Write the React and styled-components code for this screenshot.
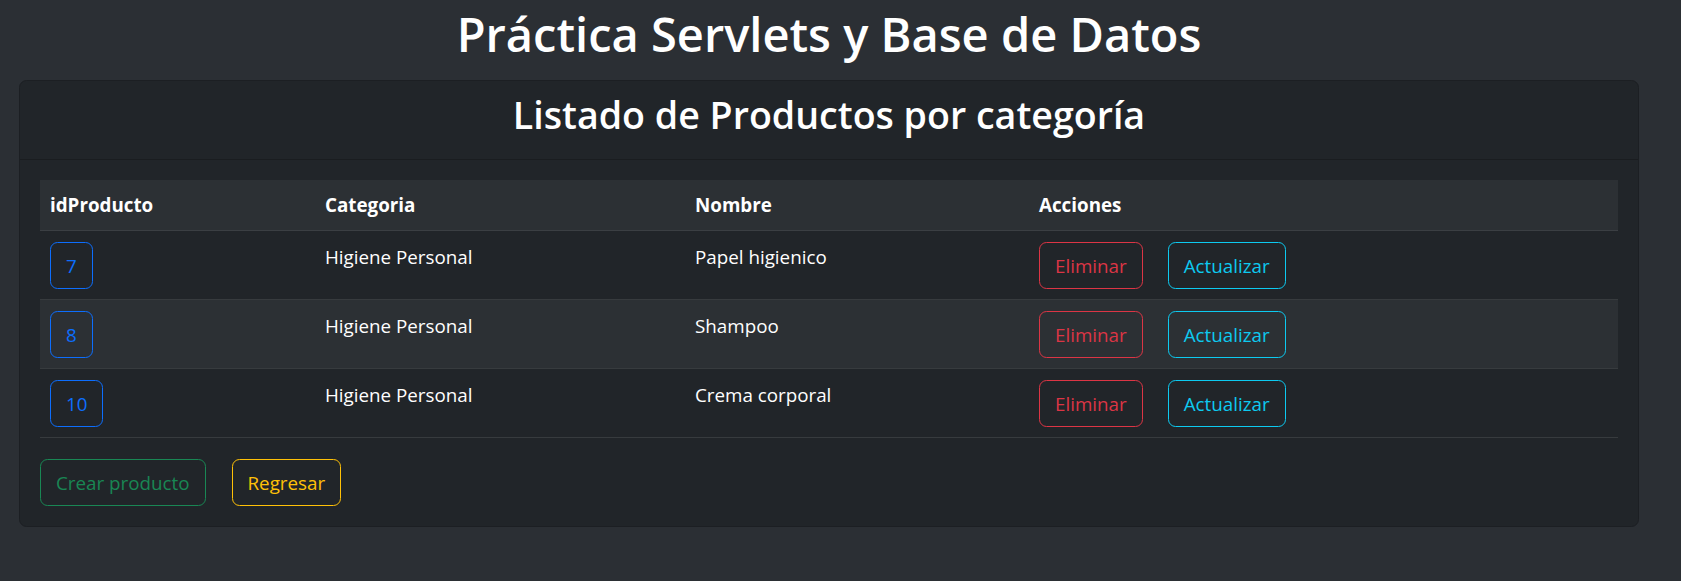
import React from 'react';
import styled, { createGlobalStyle } from 'styled-components';

const productos = [
  { id: 7, categoria: 'Higiene Personal', nombre: 'Papel higienico' },
  { id: 8, categoria: 'Higiene Personal', nombre: 'Shampoo' },
  { id: 10, categoria: 'Higiene Personal', nombre: 'Crema corporal' },
];

const colores = {
  primary: '#0d6efd',
  danger: '#dc3545',
  info: '#0dcaf0',
  success: '#198754',
  warning: '#ffc107',
};

const App = () => {
  return (
    <>
      <GlobalStyle />
      <StPage>
        <StTitle>Práctica Servlets y Base de Datos</StTitle>
        <StCard>
          <StCardHeader>
            <StCardTitle>Listado de Productos por categoría</StCardTitle>
          </StCardHeader>
          <StCardBody>
            <StTable>
              <colgroup>
                <col style={{ width: 275 }} />
                <col style={{ width: 370 }} />
                <col style={{ width: 344 }} />
                <col />
              </colgroup>
              <thead>
                <StRow $striped>
                  <StHeadCell>idProducto</StHeadCell>
                  <StHeadCell>Categoria</StHeadCell>
                  <StHeadCell>Nombre</StHeadCell>
                  <StHeadCell>Acciones</StHeadCell>
                </StRow>
              </thead>
              <tbody>
                {productos.map((p, i) => (
                  <StRow key={p.id} $striped={i % 2 === 1}>
                    <StCell>
                      <StButton $color={colores.primary}>{p.id}</StButton>
                    </StCell>
                    <StCell>{p.categoria}</StCell>
                    <StCell>{p.nombre}</StCell>
                    <StCell>
                      <StActions>
                        <StButton $color={colores.danger}>Eliminar</StButton>
                        <StButton $color={colores.info}>Actualizar</StButton>
                      </StActions>
                    </StCell>
                  </StRow>
                ))}
              </tbody>
            </StTable>
            <StActions $gap={26}>
              <StButton $color={colores.success}>Crear producto</StButton>
              <StButton $color={colores.warning}>Regresar</StButton>
            </StActions>
          </StCardBody>
        </StCard>
      </StPage>
    </>
  );
};

export default App;

const GlobalStyle = createGlobalStyle`
  body {
    margin: 0;
    background-color: #2b2f34;
    color: #fff;
    font-family: "Open Sans", "Noto Sans", sans-serif;
    font-size: 18.8px;
    line-height: 30px;
  }
`;

const StPage = styled.div`
  width: 1658px;
  padding: 4px 19px 0;
  box-sizing: border-box;
`;

const StTitle = styled.h1`
  margin: 0 0 16px;
  font-size: 47px;
  line-height: 60px;
  font-weight: 600;
  text-align: center;
  color: #fff;
`;

const StCard = styled.div`
  background-color: #212529;
  border: 1px solid #1c1f23;
  border-radius: 7.5px;
`;

const StCardHeader = styled.div`
  padding: 10px 20px;
  border-bottom: 1px solid #1a1d20;
  text-align: center;
`;

const StCardTitle = styled.h2`
  margin: 0 0 10px;
  font-size: 37.6px;
  line-height: 48px;
  font-weight: 600;
  color: #fff;
`;

const StCardBody = styled.div`
  padding: 20px;
`;

const StTable = styled.table`
  width: 100%;
  table-layout: fixed;
  border-collapse: collapse;
  margin-bottom: 21px;
`;

const StRow = styled.tr`
  background-color: ${(p) => (p.$striped ? '#2c3034' : '#212529')};
`;

const StHeadCell = styled.th`
  padding: 10px;
  text-align: left;
  font-weight: 700;
  border-bottom: 1px solid #3b3f43;
`;

const StCell = styled.td`
  padding: 11px 10px 10px;
  vertical-align: top;
  border-bottom: 1px solid #373b3e;
`;

const StActions = styled.div`
  display: flex;
  gap: ${(p) => p.$gap || 25}px;
`;

const StButton = styled.button`
  padding: 7.5px 15px;
  font-family: inherit;
  font-size: 18.8px;
  line-height: 30px;
  color: ${(p) => p.$color};
  background: transparent;
  border: 1px solid ${(p) => p.$color};
  border-radius: 7.5px;
  cursor: pointer;
`;
